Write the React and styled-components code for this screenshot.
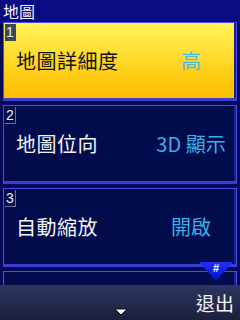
import styled, { createGlobalStyle } from "styled-components";

const GlobalStyle = createGlobalStyle`
	html, body {
		margin: 0;
		padding: 0;
		background: #050a55;
	}
	body {
		font-family: "Noto Sans CJK TC", "Noto Sans", sans-serif;
	}
`;

const Screen = styled.div`
	position: relative;
	width: 240px;
	height: 320px;
	display: flex;
	flex-direction: column;
	overflow: hidden;
	background: #06095a;
`;

const Header = styled.div`
	height: 22px;
	flex: none;
	display: flex;
	align-items: center;
	padding-left: 3px;
	background: #0a0a82;
	color: #f2f2ff;
	font-size: 16px;
	line-height: 1;
`;

const List = styled.div`
	flex: 1;
	display: flex;
	flex-direction: column;
	gap: 4px;
	padding: 0 3px;
	overflow: hidden;
`;

const Item = styled.div`
	position: relative;
	flex: none;
	height: 75px;
	display: grid;
	grid-template-columns: 1fr 94px;
	align-items: center;
	padding-left: 12px;
	border: 1px solid #4a50e0;
	border-bottom: 3px solid #3a3ed0;
	box-shadow: inset -2px 0 0 #1a1f8a;
	background: ${(p) =>
		p.$active
			? "linear-gradient(#fff45c, #ffd21e 60%, #ffbc00)"
			: "#010c4c"};
	color: ${(p) => (p.$active ? "#111" : "#f4f4f4")};
`;

const Badge = styled.div`
	position: absolute;
	top: 1px;
	left: 1px;
	width: 10px;
	height: 16px;
	display: flex;
	align-items: center;
	justify-content: center;
	font-family: "Liberation Sans", sans-serif;
	font-size: 14px;
	color: #f0f0f0;
	background: ${(p) => (p.$active ? "#3c4858" : "transparent")};
	border-right: 1px solid ${(p) => (p.$active ? "#3c4858" : "#6a7090")};
	border-bottom: 1px solid ${(p) => (p.$active ? "#3c4858" : "#6a7090")};
`;

const Label = styled.span`
	font-size: 20px;
	line-height: 1;
	letter-spacing: 0.5px;
	padding-top: 1px;
`;

const Value = styled.span`
	font-size: 20px;
	line-height: 1;
	color: ${(p) => (p.$active ? "#4cb8ea" : "#38b0ea")};
	text-align: center;
	padding-top: 1px;
	padding-left: 4px;
	white-space: nowrap;
`;

const Footer = styled.div`
	flex: none;
	height: 35px;
	position: relative;
	display: flex;
	align-items: center;
	justify-content: flex-end;
	padding-right: 6px;
	background: linear-gradient(#2e3660, #1a1f3c);
	color: #f4f4f4;
	font-size: 19px;
	line-height: 1;
`;

const DownArrow = styled.svg`
	position: absolute;
	left: 114px;
	bottom: 4px;
`;

const HashTab = styled.div`
	position: absolute;
	right: 7px;
	top: 262px;
	width: 34px;
	height: 19px;
	display: flex;
	justify-content: center;
	color: #fff;
	font-family: "Liberation Sans", sans-serif;
	font-weight: bold;
	font-size: 11px;
	line-height: 12px;
	background: linear-gradient(#2030ff, #0010c0);
	clip-path: polygon(0 0, 100% 0, 50% 100%);
	z-index: 2;
`;

const items = [
	{ n: 1, label: "地圖詳細度", value: "高", active: true },
	{ n: 2, label: "地圖位向", value: "3D 顯示" },
	{ n: 3, label: "自動縮放", value: "開啟" },
	{ n: 4, label: "", value: "", hidden: true },
];

function App() {
	return (
		<Screen>
			<GlobalStyle />
			<Header>地圖</Header>
			<List>
				{items.map((it) => (
					<Item key={it.n} $active={it.active}>
						{!it.hidden && <Badge $active={it.active}>{it.n}</Badge>}
						<Label>{it.label}</Label>
						<Value $active={it.active}>{it.value}</Value>
					</Item>
				))}
			</List>
			<HashTab>#</HashTab>
			<Footer>
				退出
				<DownArrow width="14" height="8" viewBox="0 0 14 8">
					<polygon points="1,1 13,1 7,7" fill="#fff" stroke="#111" strokeWidth="1" />
				</DownArrow>
			</Footer>
		</Screen>
	);
}

export default App;
